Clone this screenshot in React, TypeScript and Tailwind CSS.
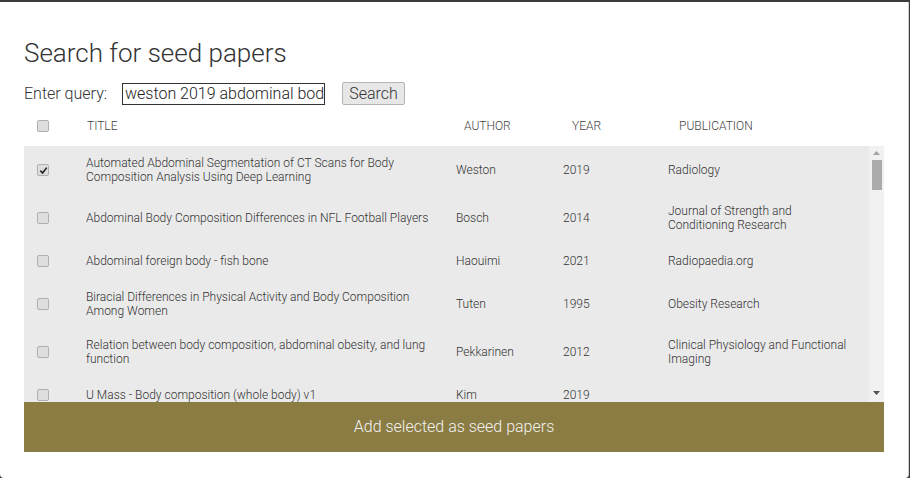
import { useState } from 'react';

interface Paper {
  title: string;
  author: string;
  year: string;
  publication: string;
}

const papers: Paper[] = [
  {
    title: 'Automated Abdominal Segmentation of CT Scans for Body Composition Analysis Using Deep Learning',
    author: 'Weston',
    year: '2019',
    publication: 'Radiology',
  },
  {
    title: 'Abdominal Body Composition Differences in NFL Football Players',
    author: 'Bosch',
    year: '2014',
    publication: 'Journal of Strength and Conditioning Research',
  },
  {
    title: 'Abdominal foreign body - fish bone',
    author: 'Haouimi',
    year: '2021',
    publication: 'Radiopaedia.org',
  },
  {
    title: 'Biracial Differences in Physical Activity and Body Composition Among Women',
    author: 'Tuten',
    year: '1995',
    publication: 'Obesity Research',
  },
  {
    title: 'Relation between body composition, abdominal obesity, and lung function',
    author: 'Pekkarinen',
    year: '2012',
    publication: 'Clinical Physiology and Functional Imaging',
  },
  {
    title: 'U Mass - Body composition (whole body) v1',
    author: 'Kim',
    year: '2019',
    publication: '',
  },
];

function Checkbox({ checked }: { checked: boolean }) {
  return (
    <div className="w-[12px] h-[12px] rounded-[2px] border border-[#b0b0b0] bg-[#dedede] flex items-center justify-center">
      {checked && (
        <svg width="9" height="9" viewBox="0 0 10 10">
          <path d="M1.5 5.2 L4 7.8 L8.6 1.8" fill="none" stroke="#222" strokeWidth="1.8" />
        </svg>
      )}
    </div>
  );
}

export default function App() {
  const [selected] = useState<number[]>([0]);

  return (
    <div className="w-[910px] h-[478px] bg-[#3b3b3b] pt-[2px] pr-[1px] font-['Roboto',sans-serif] text-[#333]">
      <div className="h-[476px] bg-white rounded-b-[4px] border-r border-[#d0d0d0] px-[24px] pt-[36px]">
        <h1 className="text-[26px] leading-[30px] font-light text-[#333]">Search for seed papers</h1>

        <div className="mt-[14px] flex items-center h-[23px] font-light">
          <span className="text-[16px] text-[#333] w-[98px]">Enter query:</span>
          <div className="w-[203px] h-[22px] border border-[#333] pl-[2px] overflow-hidden whitespace-nowrap text-[16px] leading-[20px] text-[#222]">
            weston 2019 abdominal body
          </div>
          <button className="ml-[17px] w-[63px] h-[23px] bg-[#e7e7e7] border border-[#b4b4b4] rounded-[2px] text-[16px] leading-[20px] text-[#333]">
            Search
          </button>
        </div>

        <div className="mt-[10px] h-[22px] flex items-center text-[12px] font-light text-[#444] uppercase">
          <div className="w-[63px] pl-[13px]">
            <Checkbox checked={false} />
          </div>
          <div className="w-[377px]">Title</div>
          <div className="w-[108px]">Author</div>
          <div className="w-[107px]">Year</div>
          <div>Publication</div>
        </div>

        <div className="mt-[9px] flex h-[256px]">
          <div className="flex-1 bg-[#eaeaea] overflow-hidden">
            {papers.map((p, i) => (
              <div key={i} className="flex items-center min-h-[38px] py-[10px] text-[12px] leading-[14px] font-light text-[#333]">
                <div className="w-[62px] pl-[13px] shrink-0">
                  <Checkbox checked={selected.includes(i)} />
                </div>
                <div className="w-[370px] shrink-0 pr-[14px]">{p.title}</div>
                <div className="w-[107px] shrink-0">{p.author}</div>
                <div className="w-[105px] shrink-0">{p.year}</div>
                <div className="w-[185px] shrink-0">{p.publication}</div>
              </div>
            ))}
          </div>
          <div className="w-[15px] bg-[#f1f1f1] flex flex-col items-center">
            <svg width="7" height="4" viewBox="0 0 7 4" className="mt-[5px]">
              <path d="M0 4 L3.5 0 L7 4 Z" fill="#a3a3a3" />
            </svg>
            <div className="mt-[5px] w-[10px] h-[30px] bg-[#ababab]" />
            <div className="flex-1" />
            <svg width="7" height="4" viewBox="0 0 7 4" className="mb-[7px]">
              <path d="M0 0 L7 0 L3.5 4 Z" fill="#505050" />
            </svg>
          </div>
        </div>

        <button className="w-full h-[50px] bg-[#8a7c42] text-[16px] font-light text-[#f2f2f2]">
          Add selected as seed papers
        </button>
      </div>
    </div>
  );
}
